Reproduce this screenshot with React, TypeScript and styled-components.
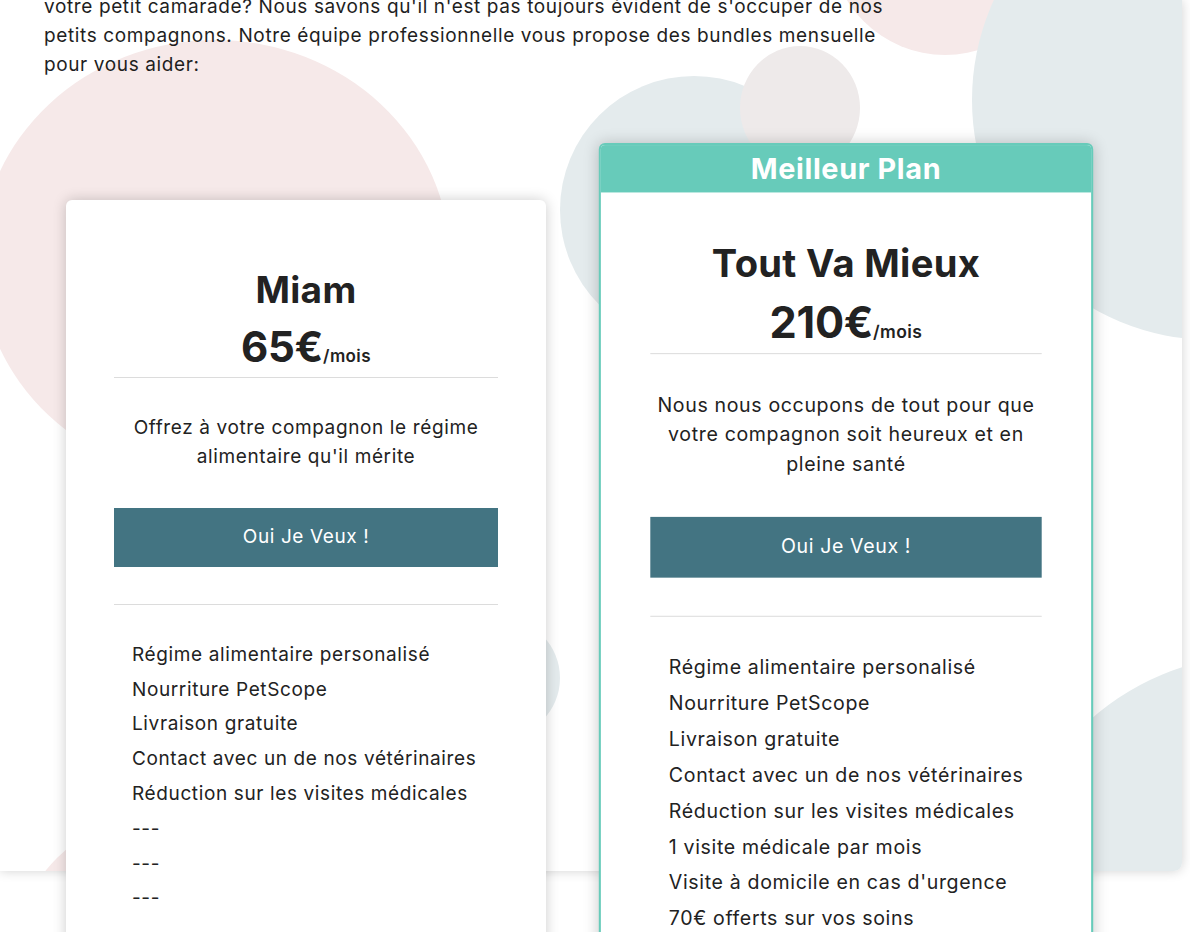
import React from "react";
import styled, { createGlobalStyle } from "styled-components";

const GlobalStyle = createGlobalStyle`
  html, body { margin: 0; padding: 0; background: #ffffff; }
  body {
    font-family: Inter, "Noto Sans", "Liberation Sans", sans-serif;
    color: #222222;
    -webkit-font-smoothing: antialiased;
  }
`;

const Page = styled.main`
  min-height: 1200px;
  background: #ffffff;
`;

const Panel = styled.section`
  position: relative;
  display: flow-root;
  width: 1182px;
  height: 871px;
  background: #ffffff;
  border-radius: 0 0 8px 0;
  box-shadow: 0 0 12px rgba(0, 0, 0, 0.18);
`;

const Backdrop = styled.svg`
  position: absolute;
  inset: 0;
  width: 100%;
  height: 100%;
  border-radius: 0 0 8px 0;
  overflow: hidden;
`;

const Content = styled.div`
  position: relative;
  display: flex;
  flex-direction: column;
  align-items: flex-start;
  gap: 64px;
  padding-left: 44px;
  margin-top: -7px;
`;

const Intro = styled.p`
  margin: 0;
  font-size: 19px;
  letter-spacing: 0.62px;
  line-height: 28.8px;
  color: #1e1e1e;
  white-space: nowrap;
`;

const CardsRow = styled.div`
  display: flex;
  align-items: flex-start;
  gap: 60px;
  margin-left: 22px;
`;

const Card = styled.article<{ $featured?: boolean }>`
  display: flex;
  flex-direction: column;
  width: 480px;
  box-sizing: border-box;
  background: #ffffff;
  border-radius: 6px;
  overflow: hidden;
  box-shadow: 0 0 14px rgba(0, 0, 0, 0.2);
  margin-top: ${(p) => (p.$featured ? 0 : 57)}px;
  border: ${(p) => (p.$featured ? "2px solid #67cbba" : "none")};
  transform: ${(p) => (p.$featured ? "scale(1.03)" : "none")};
  transform-origin: top center;
`;

const Ribbon = styled.div`
  height: 46px;
  background: #67cbba;
  color: #ffffff;
  font-size: 28px;
  font-weight: 700;
  line-height: 46px;
  text-align: center;
  letter-spacing: 0.6px;
`;

const CardBody = styled.div<{ $featured?: boolean }>`
  display: flex;
  flex-direction: column;
  padding: ${(p) => (p.$featured ? 41.5 : 63)}px 48px 40px;
`;

const PlanName = styled.h3`
  margin: 0;
  font-size: 37px;
  line-height: 54px;
  font-weight: 700;
  letter-spacing: 0.3px;
  text-align: center;
  color: #222222;
`;

const Price = styled.div`
  font-size: 42px;
  line-height: 60px;
  font-weight: 700;
  text-align: center;
  color: #222222;
  letter-spacing: -0.3px;
`;

const Per = styled.span`
  font-size: 17px;
  line-height: 1;
  font-weight: 600;
  letter-spacing: 0.4px;
`;

const Divider = styled.hr`
  width: 100%;
  border: 0;
  border-top: 1px solid #dcdcdc;
  margin: 0;
`;

const Desc = styled.p`
  margin: 36px 0;
  font-size: 19px;
  letter-spacing: 0.62px;
  line-height: 28.8px;
  text-align: center;
  color: #222222;
`;

const CTA = styled.button`
  display: block;
  width: 100%;
  margin: 0 0 37px;
  padding: 15px 0;
  border: 0;
  background: #437482;
  color: #ffffff;
  font-family: inherit;
  font-size: 19px;
  letter-spacing: 0.6px;
  line-height: 28.8px;
  cursor: pointer;
`;

const Features = styled.ul`
  display: flex;
  flex-direction: column;
  gap: 6px;
  list-style: none;
  margin: 36px 0 0;
  padding: 0 0 0 18px;
`;

const Feature = styled.li`
  font-size: 19px;
  letter-spacing: 0.62px;
  line-height: 28.8px;
  color: #222222;
`;

type Plan = {
  name: string;
  price: string;
  desc: string;
  features: string[];
  featured?: boolean;
};

const base = [
  "Régime alimentaire personalisé",
  "Nourriture PetScope",
  "Livraison gratuite",
  "Contact avec un de nos vétérinaires",
  "Réduction sur les visites médicales",
];

const plans: Plan[] = [
  {
    name: "Miam",
    price: "65€",
    desc: "Offrez à votre compagnon le régime alimentaire qu'il mérite",
    features: [...base, "---", "---", "---"],
  },
  {
    name: "Tout Va Mieux",
    price: "210€",
    desc: "Nous nous occupons de tout pour que votre compagnon soit heureux et en pleine santé",
    features: [
      ...base,
      "1 visite médicale par mois",
      "Visite à domicile en cas d'urgence",
      "70€ offerts sur vos soins",
    ],
    featured: true,
  },
];

const PINK = "#f6e9e9";
const BLUE = "#e4ebed";

function Decoration() {
  return (
    <Backdrop viewBox="0 0 1182 871" preserveAspectRatio="none" aria-hidden>
      <ellipse cx={215} cy={260} rx={235} ry={220} fill={PINK} />
      <circle cx={945} cy={-60} r={115} fill={PINK} />
      <circle cx={163} cy={964} r={150} fill={PINK} />
      <circle cx={694} cy={210} r={134} fill={BLUE} />
      <ellipse cx={800} cy={108} rx={60} ry={62} fill="#eeeaea" />
      <circle cx={1212} cy={100} r={240} fill={BLUE} />
      <circle cx={1260} cy={910} r={255} fill={BLUE} />
      <circle cx={500} cy={678} r={60} fill={BLUE} />
    </Backdrop>
  );
}

export default function App() {
  return (
    <>
      <GlobalStyle />
      <Page>
        <Panel>
          <Decoration />
          <Content>
            <Intro>
              votre petit camarade? Nous savons qu'il n'est pas toujours évident de s'occuper de nos
              <br />
              petits compagnons. Notre équipe professionnelle vous propose des bundles mensuelle
              <br />
              pour vous aider:
            </Intro>
            <CardsRow>
              {plans.map((plan) => (
                <Card key={plan.name} $featured={plan.featured}>
                  {plan.featured && <Ribbon>Meilleur Plan</Ribbon>}
                  <CardBody $featured={plan.featured}>
                    <PlanName>{plan.name}</PlanName>
                    <Price>
                      {plan.price}
                      <Per>/mois</Per>
                    </Price>
                    <Divider />
                    <Desc>{plan.desc}</Desc>
                    <CTA type="button">Oui Je Veux !</CTA>
                    <Divider />
                    <Features>
                      {plan.features.map((f, i) => (
                        <Feature key={i}>{f}</Feature>
                      ))}
                    </Features>
                  </CardBody>
                </Card>
              ))}
            </CardsRow>
          </Content>
        </Panel>
      </Page>
    </>
  );
}
